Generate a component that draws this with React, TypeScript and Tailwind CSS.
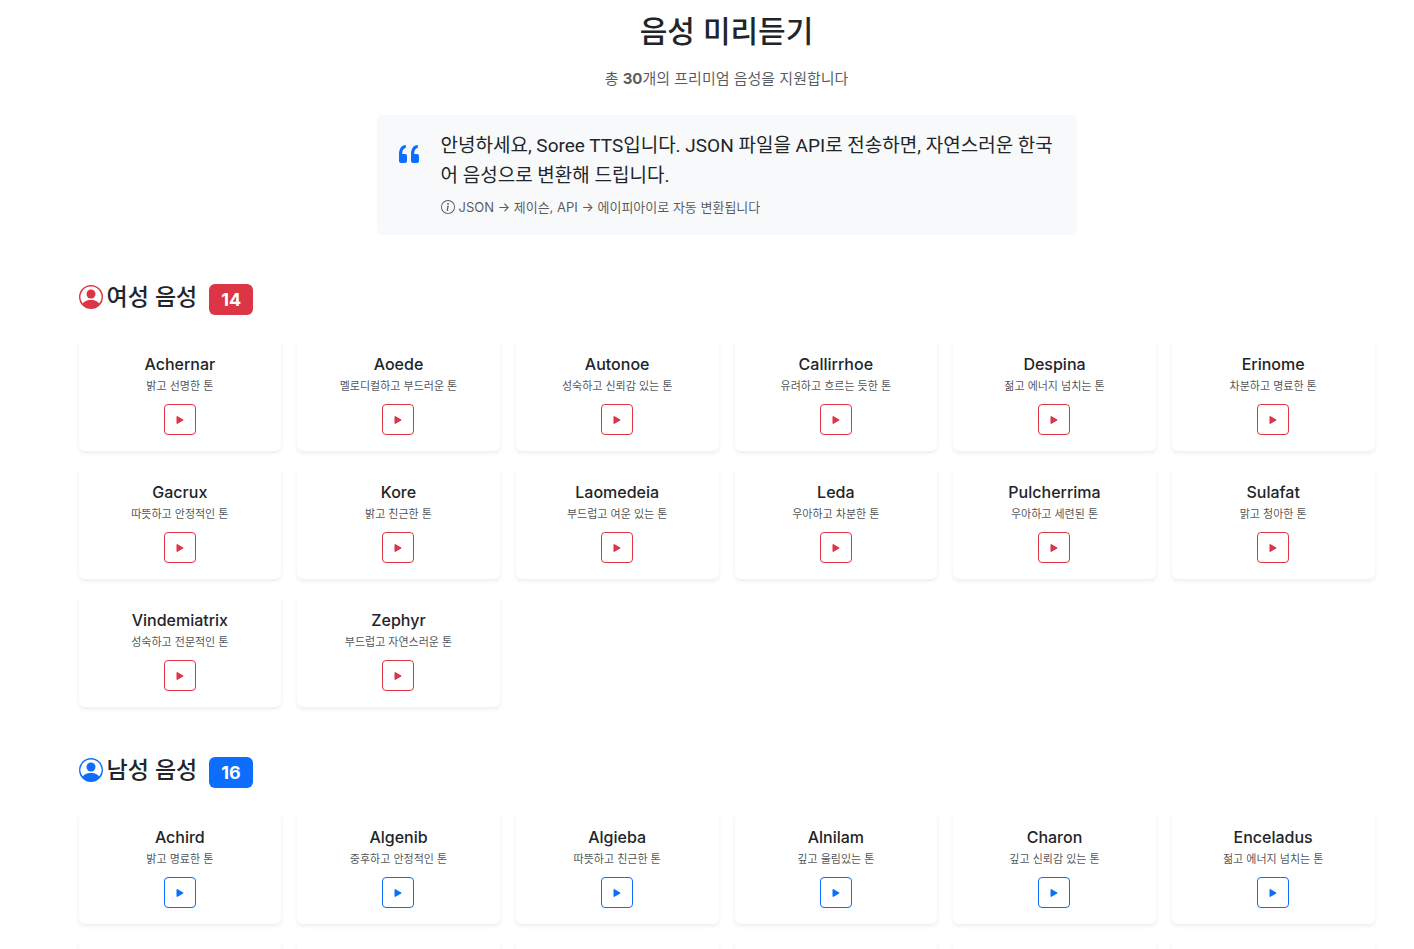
import React from 'react';
import clsx from 'clsx';
import { BsInfoCircle, BsPersonCircle, BsPlayFill, BsQuote } from 'react-icons/bs';

type Tone = 'female' | 'male';

interface Voice {
  name: string;
  desc: string;
}

const femaleVoices: Voice[] = [
  { name: 'Achernar', desc: '밝고 선명한 톤' },
  { name: 'Aoede', desc: '멜로디컬하고 부드러운 톤' },
  { name: 'Autonoe', desc: '성숙하고 신뢰감 있는 톤' },
  { name: 'Callirrhoe', desc: '유려하고 흐르는 듯한 톤' },
  { name: 'Despina', desc: '젊고 에너지 넘치는 톤' },
  { name: 'Erinome', desc: '차분하고 명료한 톤' },
  { name: 'Gacrux', desc: '따뜻하고 안정적인 톤' },
  { name: 'Kore', desc: '밝고 친근한 톤' },
  { name: 'Laomedeia', desc: '부드럽고 여운 있는 톤' },
  { name: 'Leda', desc: '우아하고 차분한 톤' },
  { name: 'Pulcherrima', desc: '우아하고 세련된 톤' },
  { name: 'Sulafat', desc: '맑고 청아한 톤' },
  { name: 'Vindemiatrix', desc: '성숙하고 전문적인 톤' },
  { name: 'Zephyr', desc: '부드럽고 자연스러운 톤' },
];

const maleVoices: Voice[] = [
  { name: 'Achird', desc: '밝고 명료한 톤' },
  { name: 'Algenib', desc: '중후하고 안정적인 톤' },
  { name: 'Algieba', desc: '따뜻하고 친근한 톤' },
  { name: 'Alnilam', desc: '깊고 울림있는 톤' },
  { name: 'Charon', desc: '깊고 신뢰감 있는 톤' },
  { name: 'Enceladus', desc: '젊고 에너지 넘치는 톤' },
  { name: 'Fenrir', desc: '힘있고 강렬한 톤' },
  { name: 'Iapetus', desc: '차분하고 명료한 톤' },
  { name: 'Orus', desc: '중후하고 안정적인 톤' },
  { name: 'Puck', desc: '밝고 친근한 톤' },
  { name: 'Rasalgethi', desc: '성숙하고 전문적인 톤' },
  { name: 'Sadachbia', desc: '밝고 명료한 톤' },
  { name: 'Sadaltager', desc: '깊고 신뢰감 있는 톤' },
  { name: 'Schedar', desc: '차분하고 안정적인 톤' },
  { name: 'Umbriel', desc: '따뜻하고 친근한 톤' },
  { name: 'Zubenelgenubi', desc: '깊고 울림있는 톤' },
];

interface VoiceCardProps {
  voice: Voice;
  tone: Tone;
}

const VoiceCard: React.FC<VoiceCardProps> = ({ voice, tone }) => (
  <li className="flex flex-col items-center rounded-md bg-white p-4 text-center shadow-[0_2px_4px_rgba(0,0,0,0.075)]">
    <h3 className="text-base leading-[19px] font-medium">{voice.name}</h3>
    <p className="mt-[3px] text-[11px] leading-[18px] text-[#212529]/80">{voice.desc}</p>
    <button
      type="button"
      aria-label={`${voice.name} 재생`}
      className={clsx(
        'mt-[9px] flex h-[31px] w-8 items-center justify-center rounded border transition-colors',
        tone === 'female'
          ? 'border-[#dc3545] text-[#dc3545] hover:bg-[#dc3545] hover:text-white'
          : 'border-[#0d6efd] text-[#0d6efd] hover:bg-[#0d6efd] hover:text-white'
      )}
    >
      <BsPlayFill className="h-3.5 w-3.5" />
    </button>
  </li>
);

interface VoiceSectionProps {
  title: string;
  voices: Voice[];
  tone: Tone;
}

const VoiceSection: React.FC<VoiceSectionProps> = ({ title, voices, tone }) => (
  <section className="mb-[49px]">
    <div className="mb-6 flex h-8 items-start">
      <BsPersonCircle
        className={clsx('mt-0.5 h-6 w-6', tone === 'female' ? 'text-[#dc3545]' : 'text-[#0d6efd]')}
      />
      <h2 className="ml-1 text-[23px] leading-7 font-medium">{title}</h2>
      <span
        className={clsx(
          'ml-3 flex h-[31px] items-center self-end rounded-md px-3 text-lg font-bold text-white',
          tone === 'female' ? 'bg-[#dc3545]' : 'bg-[#0d6efd]'
        )}
      >
        {voices.length}
      </span>
    </div>
    <ul className="grid grid-cols-2 gap-4 md:grid-cols-4 lg:grid-cols-6">
      {voices.map((voice) => (
        <VoiceCard key={voice.name} voice={voice} tone={tone} />
      ))}
    </ul>
  </section>
);

export default function App() {
  const total = femaleVoices.length + maleVoices.length;

  return (
    <main className="bg-white pt-3 pl-[39px] font-['Inter','Noto_Sans_CJK_KR',sans-serif] text-[#212529]">
      <div className="mx-auto max-w-[1296px]">
        {/* Page heading */}
        <header className="text-center">
          <h1 className="text-[30px] leading-[39px] font-medium">음성 미리듣기</h1>
          <p className="mt-4 text-[15px] leading-6 text-[#212529]/75">
            총 <strong className="font-bold">{total}</strong>개의 프리미엄 음성을 지원합니다
          </p>
        </header>

        {/* Sample sentence */}
        <div className="mx-auto mt-6 mb-12 flex max-w-[700px] gap-4 rounded-md bg-[#f8f9fa] p-4">
          <BsQuote className="mt-2 h-8 w-8 shrink-0 text-[#0d6efd]" />
          <div>
            <p className="font-['Roboto','Noto_Sans_CJK_KR',sans-serif] text-[19px] leading-[30px]">
              안녕하세요, Soree TTS입니다. JSON 파일을 API로 전송하면, 자연스러운 한국어 음성으로 변환해 드립니다.
            </p>
            <p className="mt-1 flex items-center gap-1 text-[13px] leading-6 text-[#212529]/75">
              <BsInfoCircle className="h-3.5 w-3.5" />
              JSON → 제이슨, API → 에이피아이로 자동 변환됩니다
            </p>
          </div>
        </div>

        <VoiceSection title="여성 음성" voices={femaleVoices} tone="female" />
        <VoiceSection title="남성 음성" voices={maleVoices} tone="male" />
      </div>
    </main>
  );
}
